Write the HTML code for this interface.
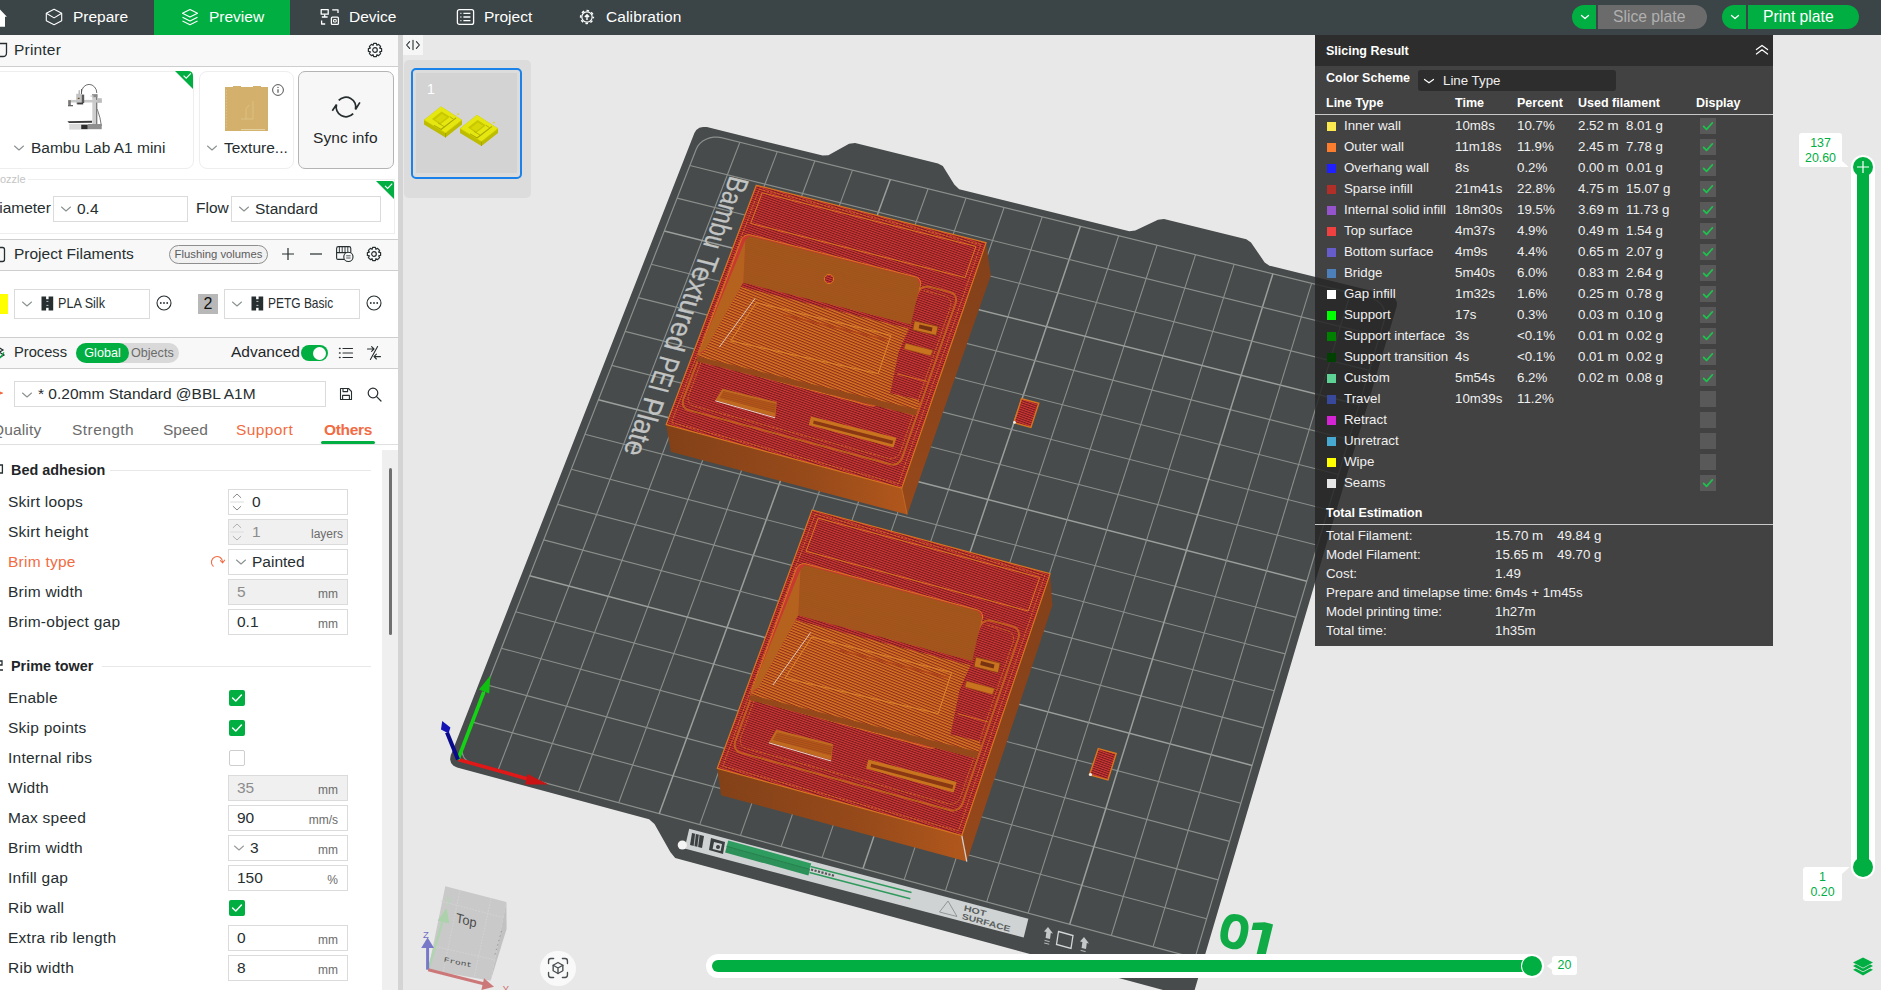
<!DOCTYPE html>
<html>
<head>
<meta charset="utf-8">
<title>Bambu Studio</title>
<style>
*{box-sizing:border-box;margin:0;padding:0}
html,body{width:1881px;height:990px;overflow:hidden;background:#e8e8e8;font-family:"Liberation Sans",sans-serif;color:#262e30}
.abs{position:absolute}
#top{position:absolute;left:0;top:0;width:1881px;height:35px;background:#3b4446;z-index:10}
.tab{position:absolute;top:0;height:35px;color:#fff;font-size:15.5px;line-height:34px;white-space:nowrap}
#left{position:absolute;left:0;top:0;width:398px;height:990px;background:#fff;overflow:hidden;z-index:5}
#divider{position:absolute;left:398px;top:0;width:5px;height:990px;background:#d4d4d4;z-index:5}
#view{position:absolute;left:0;top:0;width:1881px;height:990px;background:#e8e8e8;overflow:hidden;z-index:1}
#ov{position:absolute;left:0;top:0;width:1881px;height:990px;z-index:3}
.hdr{position:absolute;left:0;width:398px;background:#f8f8f8;border-top:1px solid #cecece;border-bottom:1px solid #cecece;font-size:15.5px}
.t{position:absolute;white-space:nowrap;font-size:15.5px;line-height:18px;color:#262e30}
.inp{position:absolute;height:26px;border:1px solid #dbdbdb;background:#fff;font-size:15.5px;line-height:24px;white-space:nowrap}
.inp.dis{background:#f0f0f0;color:#8c8c8c}
.unit{position:absolute;right:9px;top:2px;font-size:12px;color:#6b6b6b;line-height:24px}
.cb{position:absolute;width:16px;height:16px;border-radius:2px;background:#00ae42}
.cb.off{background:#fff;border:1px solid #cecece}
.r{position:absolute;white-space:nowrap;font-size:13.3px;line-height:16px;color:#f0f0f0}
.rb{position:absolute;white-space:nowrap;font-size:12.5px;line-height:16px;color:#fff;font-weight:bold}
</style>
</head>
<body>

<div id="top">
  <svg class="abs" style="left:0;top:0" width="12" height="35" viewBox="0 0 12 35"><path d="M-8 17 L-2 7.4 L6.9 16.7 L5 16.7 L5 26.8 L-8 26.8 Z" fill="#fff"/></svg>
  <div class="tab" style="left:73px">Prepare</div>
  <svg class="abs" style="left:44px;top:7px" width="20" height="21" viewBox="0 0 20 21" fill="none" stroke="#fff" stroke-width="1.1" stroke-linejoin="round"><path d="M10.1 2.2 L17.7 6.2 L17.7 13.7 L10.1 17.8 L2.3 13.7 L2.3 6.2 Z"/><path d="M2.3 6.2 L10.1 10.9 L17.7 6.2"/></svg>
  <div class="abs" style="left:154px;top:0;width:136px;height:35px;background:#00ae42"></div>
  <div class="tab" style="left:209px">Preview</div>
  <svg class="abs" style="left:180px;top:7px" width="20" height="21" viewBox="0 0 20 21" fill="none" stroke="#fff" stroke-width="1.1" stroke-linejoin="round"><path d="M10 2.5 L17.5 6.3 L10 10.1 L2.5 6.3 Z"/><path d="M2.5 10.2 L10 14 L17.5 10.2"/><path d="M2.5 14 L10 17.8 L17.5 14"/></svg>
  <div class="tab" style="left:349px">Device</div>
  <svg class="abs" style="left:319px;top:7px" width="22" height="21" viewBox="0 0 22 21" fill="none" stroke="#fff" stroke-width="1.3" stroke-linejoin="round"><rect x="2.2" y="2.6" width="7" height="4.6"/><path d="M5.7 7.2 L5.7 10 M2.8 10 L8.6 10"/><path d="M13.2 2.8 L19 2.8 L19 6"/><path d="M2.6 13.4 L2.6 17 L6.2 17"/><rect x="12.4" y="10.2" width="7" height="7.2" rx="1"/><rect x="14.6" y="12.6" width="2.6" height="2.4" stroke-width="1"/></svg>
  <div class="tab" style="left:484px">Project</div>
  <svg class="abs" style="left:455px;top:7px" width="22" height="21" viewBox="0 0 22 21" fill="none" stroke="#fff" stroke-width="1.3" stroke-linejoin="round"><rect x="2.4" y="2.6" width="16.2" height="14.8" rx="2"/><path d="M8.4 6.4 L15.4 6.4 M8.4 10 L15.4 10 M8.4 13.6 L15.4 13.6"/><path d="M5.4 6.4 L6.4 6.4 M5.4 10 L6.4 10 M5.4 13.6 L6.4 13.6"/></svg>
  <div class="tab" style="left:606px;letter-spacing:0.12px">Calibration</div>
  <svg class="abs" style="left:578px;top:8px" width="18" height="18" viewBox="0 0 18 18" fill="none" stroke="#fff" stroke-linejoin="round"><circle cx="9" cy="9" r="5.2" stroke-width="1.2"/><circle cx="9" cy="9" r="6.4" stroke-width="1.5" stroke-dasharray="2.6 2.43" stroke-dashoffset="1.3"/><path d="M9 12 L9 7.2 M6.9 9 L9 6.8 L11.1 9" stroke-width="1.4"/></svg>
  <div class="abs" style="left:1572px;top:5px;width:24px;height:24px;background:#00ae42;border-radius:12px 0 0 12px"></div>
  <svg class="abs" style="left:1580px;top:13px" width="10" height="8" viewBox="0 0 10 8" fill="none" stroke="#fff" stroke-width="1.3" stroke-linecap="round" stroke-linejoin="round"><path d="M1.5 2.5 L5 5.5 L8.5 2.5"/></svg>
  <div class="abs" style="left:1598px;top:5px;width:109px;height:24px;background:#6b6b6b;border-radius:0 12px 12px 0;color:#b0b0b0;font-size:15.7px;line-height:23px;padding-left:15px;white-space:nowrap">Slice plate</div>
  <div class="abs" style="left:1722px;top:5px;width:24px;height:24px;background:#00ae42;border-radius:12px 0 0 12px"></div>
  <svg class="abs" style="left:1730px;top:13px" width="10" height="8" viewBox="0 0 10 8" fill="none" stroke="#fff" stroke-width="1.3" stroke-linecap="round" stroke-linejoin="round"><path d="M1.5 2.5 L5 5.5 L8.5 2.5"/></svg>
  <div class="abs" style="left:1748px;top:5px;width:111px;height:24px;background:#00ae42;border-radius:0 12px 12px 0;color:#fff;font-size:15.7px;line-height:23px;padding-left:15px;white-space:nowrap">Print plate</div>
</div>
<div id="left">
  <div class="hdr" style="top:35px;height:32px;border-top:none"></div>
  <svg class="abs" style="left:-6px;top:41px" width="14" height="18" viewBox="0 0 14 18" fill="none" stroke="#262e30" stroke-width="1.3"><path d="M2 2.5 L12.5 2.5 L12.5 12 Q12.5 15.5 9 15.5 L2 15.5"/></svg>
  <div class="t" style="left:14px;top:41px;letter-spacing:0.2px">Printer</div>
  <svg class="abs" style="left:367px;top:42px" width="16" height="16" viewBox="0 0 16 16" fill="none" stroke="#262e30" stroke-width="1.2" stroke-linejoin="round"><path d="M6.6 1.4 L9.4 1.4 L9.9 3.3 L11.6 2.4 L13.6 4.4 L12.7 6.1 L14.6 6.6 L14.6 9.4 L12.7 9.9 L13.6 11.6 L11.6 13.6 L9.9 12.7 L9.4 14.6 L6.6 14.6 L6.1 12.7 L4.4 13.6 L2.4 11.6 L3.3 9.9 L1.4 9.4 L1.4 6.6 L3.3 6.1 L2.4 4.4 L4.4 2.4 L6.1 3.3 Z"/><circle cx="8" cy="8" r="2.3"/></svg>
  <div class="abs" style="left:-10px;top:71px;width:204px;height:98px;border:1px solid #eeeeee;border-radius:8px;background:#fff"></div>
  <div class="abs" style="left:199px;top:71px;width:95px;height:98px;border:1px solid #eeeeee;border-radius:8px;background:#fff"></div>
  <div class="abs" style="left:298px;top:71px;width:96px;height:98px;border:1px solid #b4b4b4;border-radius:7px;background:#f7f7f7"></div>
  <svg class="abs" style="left:175px;top:71px" width="19" height="19" viewBox="0 0 19 19"><path d="M0 0 L13 0 Q18 0 18 5 L18 18 Z" fill="#00ae42"/><path d="M8.6 4.6 L11.2 7.2 L15.8 2.4" fill="none" stroke="#fff" stroke-width="1.1"/></svg>
  <svg class="abs" style="left:13px;top:144px" width="12" height="8" viewBox="0 0 12 8" fill="none" stroke="#8b9191" stroke-width="1.1" stroke-linecap="round" stroke-linejoin="round"><path d="M1.5 2 L6 6 L10.5 2"/></svg>
  <div class="t" style="left:31px;top:139px">Bambu Lab A1 mini</div>
  <svg class="abs" style="left:206px;top:144px" width="12" height="8" viewBox="0 0 12 8" fill="none" stroke="#8b9191" stroke-width="1.1" stroke-linecap="round" stroke-linejoin="round"><path d="M1.5 2 L6 6 L10.5 2"/></svg>
  <div class="t" style="left:224px;top:139px">Texture...</div>
  <div class="t" style="left:313px;top:129px;color:#1f2628;letter-spacing:0.1px">Sync info</div>
  <svg class="abs" style="left:328.7px;top:91.3px" width="34" height="32" viewBox="0 0 34 32" fill="none" stroke="#262e30" stroke-width="1.7" stroke-linejoin="miter"><path d="M9.72 9.44 A9.8 9.8 0 0 1 26.47 18.54 L30.9 11.4"/><path d="M24.17 22.68 A9.8 9.8 0 0 1 7.53 13.46 L3.3 19.8"/></svg>
  <div class="abs" style="left:225px;top:87.4px;width:43px;height:44px;background:#d3b06b"></div><div class="abs" style="left:233px;top:86px;width:8px;height:2px;background:#d3b06b"></div><div class="abs" style="left:253px;top:86px;width:8px;height:2px;background:#d3b06b"></div>
  <svg class="abs" style="left:225px;top:87px" width="43" height="45" viewBox="0 0 43 45" fill="none" stroke="#e2c88e" stroke-width="0.7"><path d="M1.5 3 L1.5 42" stroke-dasharray="1.5 1.5"/><path d="M16 32 L28 32 L28 14 M21 32 L21 22 L24 18" /><path d="M16 42.6 L40 42.6" stroke="#e6d4a8" stroke-width="1"/></svg>
  <svg class="abs" style="left:271px;top:83px" width="14" height="14" viewBox="0 0 14 14"><circle cx="7" cy="7" r="5.4" fill="none" stroke="#555" stroke-width="1"/><path d="M7 6.2 L7 9.8" stroke="#555" stroke-width="1.2"/><circle cx="7" cy="4.4" r="0.7" fill="#555"/></svg>
  <svg class="abs" style="left:55px;top:76px" width="60" height="60" viewBox="0 0 60 60"><path d="M26.4 17 A7.7 8.6 0 0 1 41.8 17" fill="none" stroke="#4a4a4a" stroke-width="0.8"/><path d="M42.2 33 Q45.6 42 46.4 50" fill="none" stroke="#555" stroke-width="0.8"/><rect x="37.3" y="18.4" width="4.9" height="30.4" fill="#cdcdcd"/><rect x="41" y="18.4" width="1.3" height="30.4" fill="#7c7c7c"/><rect x="37" y="18.2" width="5.4" height="3" fill="#8a8a8a"/><rect x="35.4" y="19.4" width="3" height="1.4" fill="#d8d8d8"/><rect x="13.3" y="23.9" width="33.4" height="2.6" fill="#c9c9c9"/><rect x="42.2" y="22.2" width="4.6" height="4.6" fill="#bdbdbd"/><rect x="21.2" y="17.8" width="6" height="10.4" fill="#c4c4c4"/><rect x="26.8" y="18.6" width="2.4" height="8.4" fill="#5a5a5a"/><rect x="22.2" y="26.6" width="6" height="1.8" fill="#3c3c3c"/><rect x="22.8" y="21.8" width="1.8" height="1.2" fill="#6a5020"/><rect x="23.6" y="14.2" width="1.2" height="4" fill="#aaa"/><rect x="26" y="13" width="0.9" height="5" fill="#555"/><rect x="13.2" y="24.2" width="2.6" height="4.8" fill="#777"/><rect x="13" y="29" width="5" height="1.3" fill="#666"/><path d="M12.4 45.2 L37 44.8 L37 46.8 L14 47 Z" fill="#3a3a3a"/><rect x="14.2" y="47.9" width="12" height="5.7" fill="#dadada"/><rect x="26.2" y="48.6" width="6.6" height="4.6" fill="#2c2c2c"/><rect x="32.8" y="48" width="13.9" height="5.2" fill="#8e8e8e"/></svg>
  <div class="abs" style="left:-10px;top:179px;width:405px;height:55px;border:1px solid #eeeeee"></div>
  <div class="abs" style="left:-2px;top:172px;padding:0 2px;background:#fff;font-size:11px;color:#c4c4c4;line-height:14px">ozzle</div>
  <svg class="abs" style="left:376px;top:181px" width="19" height="19" viewBox="0 0 19 19"><path d="M0 0 L16 0 Q18 0 18 2 L18 18 Z" fill="#00ae42"/><path d="M9 4.8 L11.6 7.4 L16.2 2.6" fill="none" stroke="#fff" stroke-width="1.1"/></svg>
  <div class="t" style="left:-12px;top:199px">Diameter</div>
  <div class="inp" style="left:53px;top:196px;width:135px;padding-left:23px">0.4</div><svg class="abs" style="left:60px;top:205px" width="12" height="8" viewBox="0 0 12 8" fill="none" stroke="#8b9191" stroke-width="1.1" stroke-linecap="round" stroke-linejoin="round"><path d="M1.5 2 L6 6 L10.5 2"/></svg>
  <div class="t" style="left:196px;top:199px">Flow</div>
  <div class="inp" style="left:231px;top:196px;width:150px;padding-left:23px">Standard</div><svg class="abs" style="left:238px;top:205px" width="12" height="8" viewBox="0 0 12 8" fill="none" stroke="#8b9191" stroke-width="1.1" stroke-linecap="round" stroke-linejoin="round"><path d="M1.5 2 L6 6 L10.5 2"/></svg>
  <div class="hdr" style="top:239px;height:32px"></div>
  <svg class="abs" style="left:-6px;top:246px" width="14" height="18" viewBox="0 0 14 18" fill="none" stroke="#262e30" stroke-width="1.3"><rect x="1" y="1.5" width="9.5" height="14" rx="2"/></svg>
  <div class="t" style="left:14px;top:245px">Project Filaments</div>
  <div class="abs" style="left:169px;top:245px;width:99px;height:19px;border:1px solid #8e8e8e;border-radius:10px;background:#f1f1f1;font-size:11.3px;color:#5c5c5c;line-height:17px;text-align:center;white-space:nowrap">Flushing volumes</div>
  <svg class="abs" style="left:281px;top:247px" width="14" height="14" viewBox="0 0 14 14" stroke="#262e30" stroke-width="1.2"><path d="M7 1 L7 13 M1 7 L13 7"/></svg>
  <svg class="abs" style="left:309px;top:247px" width="14" height="14" viewBox="0 0 14 14" stroke="#262e30" stroke-width="1.2"><path d="M1 7 L13 7"/></svg>
  <svg class="abs" style="left:335px;top:245px" width="20" height="19" viewBox="0 0 20 19" fill="none" stroke="#262e30" stroke-width="1.1" stroke-linejoin="round"><path d="M1.6 7.6 L1.6 3.4 Q1.6 1.6 3.4 1.6 L14 1.6 Q15.8 1.6 15.8 3.4 L15.8 7.6 Z"/><path d="M4.4 1.6 L4.4 7.6 M7.2 1.6 L7.2 7.6 M10 1.6 L10 7.6 M12.8 1.6 L12.8 7.6" stroke-width="0.9"/><path d="M1.6 7.6 L1.6 13 Q1.6 14.4 3 14.4 L9 14.4"/><circle cx="13.4" cy="11.9" r="4.6" fill="#f8f8f8"/><path d="M11.2 10.8 L15.6 10.8 M11.2 13 L15.6 13" stroke-width="0.8"/></svg>
  <svg class="abs" style="left:366px;top:246px" width="16" height="16" viewBox="0 0 16 16" fill="none" stroke="#262e30" stroke-width="1.2" stroke-linejoin="round"><path d="M6.6 1.4 L9.4 1.4 L9.9 3.3 L11.6 2.4 L13.6 4.4 L12.7 6.1 L14.6 6.6 L14.6 9.4 L12.7 9.9 L13.6 11.6 L11.6 13.6 L9.9 12.7 L9.4 14.6 L6.6 14.6 L6.1 12.7 L4.4 13.6 L2.4 11.6 L3.3 9.9 L1.4 9.4 L1.4 6.6 L3.3 6.1 L2.4 4.4 L4.4 2.4 L6.1 3.3 Z"/><circle cx="8" cy="8" r="2.3"/></svg>
  <div class="abs" style="left:-6px;top:294px;width:14px;height:20px;background:#ffff00"></div>
  <div class="inp" style="left:14px;top:289px;width:136px;height:30px;line-height:27px;padding-left:43px;font-size:14.5px"><span style="display:inline-block;transform:scaleX(0.87);transform-origin:0 50%">PLA Silk</span></div><svg class="abs" style="left:21px;top:300px" width="12" height="8" viewBox="0 0 12 8" fill="none" stroke="#8b9191" stroke-width="1.1" stroke-linecap="round" stroke-linejoin="round"><path d="M1.5 2 L6 6 L10.5 2"/></svg><svg class="abs" style="left:41px;top:296px" width="13" height="15" viewBox="0 0 13 15"><rect x="0.5" y="0.5" width="4.6" height="14" fill="#262e30"/><rect x="7.6" y="0.5" width="4.6" height="14" fill="#262e30"/><rect x="5" y="3.2" width="3" height="8.6" fill="#262e30"/><path d="M5.4 5.4 L7.4 5.4 M5.4 9.4 L7.4 9.4" stroke="#fff" stroke-width="0.7"/></svg>
  <svg class="abs" style="left:155px;top:294px" width="18" height="18" viewBox="0 0 18 18"><circle cx="9" cy="9" r="7" fill="none" stroke="#262e30" stroke-width="1.1"/><circle cx="5.8" cy="9" r="0.9" fill="#262e30"/><circle cx="9" cy="9" r="0.9" fill="#262e30"/><circle cx="12.2" cy="9" r="0.9" fill="#262e30"/></svg>
  <div class="abs" style="left:198px;top:294px;width:20px;height:20px;background:#b8b8b8;font-size:16px;line-height:20px;text-align:center;color:#111">2</div>
  <div class="inp" style="left:224px;top:289px;width:136px;height:30px;line-height:27px;padding-left:43px;font-size:14.5px"><span style="display:inline-block;transform:scaleX(0.825);transform-origin:0 50%">PETG Basic</span></div><svg class="abs" style="left:231px;top:300px" width="12" height="8" viewBox="0 0 12 8" fill="none" stroke="#8b9191" stroke-width="1.1" stroke-linecap="round" stroke-linejoin="round"><path d="M1.5 2 L6 6 L10.5 2"/></svg><svg class="abs" style="left:251px;top:296px" width="13" height="15" viewBox="0 0 13 15"><rect x="0.5" y="0.5" width="4.6" height="14" fill="#262e30"/><rect x="7.6" y="0.5" width="4.6" height="14" fill="#262e30"/><rect x="5" y="3.2" width="3" height="8.6" fill="#262e30"/><path d="M5.4 5.4 L7.4 5.4 M5.4 9.4 L7.4 9.4" stroke="#fff" stroke-width="0.7"/></svg>
  <svg class="abs" style="left:365px;top:294px" width="18" height="18" viewBox="0 0 18 18"><circle cx="9" cy="9" r="7" fill="none" stroke="#262e30" stroke-width="1.1"/><circle cx="5.8" cy="9" r="0.9" fill="#262e30"/><circle cx="9" cy="9" r="0.9" fill="#262e30"/><circle cx="12.2" cy="9" r="0.9" fill="#262e30"/></svg>
  <div class="hdr" style="top:337px;height:32px"></div>
  <svg class="abs" style="left:-8px;top:344px" width="14" height="18" viewBox="0 0 14 18" fill="none" stroke="#262e30" stroke-width="1.2"><path d="M6 3 L11 6 L6 9 M7 8 L12 11 L6 14.5"/><path d="M5 11 L8.4 13.6 L12 8.4" stroke="#00ae42"/></svg>
  <div class="t" style="left:14px;top:343px;font-size:14.7px">Process</div>
  <div class="abs" style="left:76px;top:343px;width:103px;height:20px;border-radius:10px;background:#d9d9d9"></div>
  <div class="abs" style="left:76px;top:343px;width:53px;height:20px;border-radius:10px;background:#00ae42;color:#fff;font-size:12.6px;line-height:20px;text-align:center">Global</div>
  <div class="abs" style="left:131px;top:343px;font-size:12.6px;line-height:20px;color:#6b6b6b">Objects</div>
  <div class="t" style="left:231px;top:343px;color:#1f2628">Advanced</div>
  <div class="abs" style="left:301px;top:345px;width:27px;height:16px;border-radius:8px;background:#00ae42"></div><div class="abs" style="left:313px;top:346.5px;width:13px;height:13px;border-radius:7px;background:#fff"></div>
  <svg class="abs" style="left:338px;top:345px" width="16" height="16" viewBox="0 0 16 16" fill="none" stroke="#262e30" stroke-width="1.2" stroke-linecap="round"><path d="M5 3.5 L14.5 3.5 M5 8 L14.5 8 M5 12.5 L14.5 12.5"/><path d="M1.6 3.5 L2 3.5 M1.6 8 L2 8 M1.6 12.5 L2 12.5" stroke-width="1.6"/></svg>
  <svg class="abs" style="left:366px;top:345px" width="16" height="16" viewBox="0 0 16 16" fill="none" stroke="#262e30" stroke-width="1.1" stroke-linecap="round" stroke-linejoin="round"><path d="M1.5 4 L8 4 M5.6 1.6 L8 4 L5.6 6.4"/><path d="M14.5 11.6 L8 11.6 M10.4 9.2 L8 11.6 L10.4 14"/><path d="M11.6 1.6 L4.4 14.4"/></svg>
  <svg class="abs" style="left:-9.5px;top:386px" width="12" height="14" viewBox="0 0 12 14"><path d="M2 4 L10 7 L4 9 L6 12" fill="none" stroke="#f26b43" stroke-width="2"/></svg>
  <div class="inp" style="left:14px;top:381px;width:312px;height:26px;line-height:24px;padding-left:23px">* 0.20mm Standard @BBL A1M</div><svg class="abs" style="left:21px;top:391px" width="12" height="8" viewBox="0 0 12 8" fill="none" stroke="#8b9191" stroke-width="1.1" stroke-linecap="round" stroke-linejoin="round"><path d="M1.5 2 L6 6 L10.5 2"/></svg>
  <svg class="abs" style="left:338px;top:386px" width="16" height="16" viewBox="0 0 16 16" fill="none" stroke="#262e30" stroke-width="1.1" stroke-linejoin="round"><path d="M2.5 2.5 L10.5 2.5 L13.5 5.5 L13.5 13.5 L2.5 13.5 Z"/><path d="M5 2.5 L5 5.6 L9.6 5.6 L9.6 2.5"/><path d="M4.6 13.5 L4.6 9.4 L11.4 9.4 L11.4 13.5"/></svg>
  <svg class="abs" style="left:366px;top:386px" width="17" height="17" viewBox="0 0 17 17" fill="none" stroke="#262e30" stroke-width="1.2" stroke-linecap="round"><circle cx="7" cy="7" r="4.8"/><path d="M10.6 10.6 L15 15"/></svg>
  <div class="t" style="left:-8px;top:421px;color:#6b6b6b;letter-spacing:0.15px">Quality</div>
  <div class="t" style="left:72px;top:421px;color:#6b6b6b;letter-spacing:0.45px">Strength</div>
  <div class="t" style="left:163px;top:421px;color:#6b6b6b">Speed</div>
  <div class="t" style="left:236px;top:421px;color:#f26b43;letter-spacing:0.4px">Support</div>
  <div class="t" style="left:324px;top:421px;color:#f26b43;font-weight:bold;letter-spacing:-0.3px">Others</div>
  <div class="abs" style="left:321px;top:441px;width:54px;height:3px;border-radius:1.5px;background:#00ae42"></div>
  <div class="abs" style="left:0;top:444px;width:398px;height:1px;background:#dfdfdf"></div>
  <div class="abs" style="left:382px;top:450px;width:16px;height:540px;background:#efefef"></div>
  <div class="abs" style="left:389px;top:468px;width:3px;height:167px;background:#6f6f6f;border-radius:1.5px"></div>
  <svg class="abs" style="left:-7px;top:462px" width="12" height="16" viewBox="0 0 12 16" fill="none" stroke="#262e30" stroke-width="1.3"><path d="M3 3 L9.4 3 L9.4 11 L3 11 M6 11 L6 14"/></svg>
  <div class="t" style="left:11px;top:461px;font-weight:bold;font-size:14.4px;color:#1f2628">Bed adhesion</div><div class="abs" style="left:110px;top:470px;width:261px;height:1px;background:#e8e8e8"></div>
  <svg class="abs" style="left:-7px;top:658px" width="12" height="16" viewBox="0 0 12 16" fill="none" stroke="#262e30" stroke-width="1.3"><path d="M2 3 L9 3 L9 7 L4 7 L4 12 L10 12"/></svg>
  <div class="t" style="left:11px;top:657px;font-weight:bold;font-size:14.4px;color:#1f2628">Prime tower</div><div class="abs" style="left:102px;top:666px;width:269px;height:1px;background:#e8e8e8"></div>
  <div class="t" style="left:8px;top:493px;letter-spacing:0.25px">Skirt loops</div><div class="inp" style="left:228px;top:489px;width:120px;padding-left:23px">0</div><svg class="abs" style="left:230px;top:490px" width="14" height="24" viewBox="0 0 14 24" fill="none" stroke="#8a8a8a" stroke-width="1" stroke-linecap="round" stroke-linejoin="round"><path d="M3.2 7.6 L7 4 L10.8 7.6"/><path d="M3.2 16.4 L7 20 L10.8 16.4"/><path d="M0.5 12 L13.5 12" stroke="#dcdcdc"/></svg>
  <div class="t" style="left:8px;top:523px;letter-spacing:0.25px">Skirt height</div><div class="inp dis" style="left:228px;top:519px;width:120px;padding-left:23px">1<span class="unit" style="right:4px">layers</span></div><svg class="abs" style="left:230px;top:520px" width="14" height="24" viewBox="0 0 14 24" fill="none" stroke="#b0b0b0" stroke-width="1" stroke-linecap="round" stroke-linejoin="round"><path d="M3.2 7.6 L7 4 L10.8 7.6"/><path d="M3.2 16.4 L7 20 L10.8 16.4"/><path d="M0.5 12 L13.5 12" stroke="#dcdcdc"/></svg>
  <div class="t" style="left:8px;top:553px;letter-spacing:0.25px;color:#f26b43">Brim type</div><div class="inp" style="left:228px;top:549px;width:120px;padding-left:23px">Painted</div><svg class="abs" style="left:235px;top:558px" width="12" height="8" viewBox="0 0 12 8" fill="none" stroke="#8b9191" stroke-width="1.1" stroke-linecap="round" stroke-linejoin="round"><path d="M1.5 2 L6 6 L10.5 2"/></svg>
  <svg class="abs" style="left:209px;top:553px" width="17" height="17" viewBox="0 0 17 17" fill="none" stroke="#f26b43" stroke-width="1.1" stroke-linecap="round" stroke-linejoin="round"><path d="M4.2 13.2 A5.6 5.6 0 1 1 13.6 9.4"/><path d="M11.4 7.6 L13.7 9.8 L15.6 7.2"/></svg>
  <div class="t" style="left:8px;top:583px;letter-spacing:0.25px">Brim width</div><div class="inp dis" style="left:228px;top:579px;width:120px;padding-left:8px">5<span class="unit">mm</span></div>
  <div class="t" style="left:8px;top:613px;letter-spacing:0.25px">Brim-object gap</div><div class="inp" style="left:228px;top:609px;width:120px;padding-left:8px">0.1<span class="unit">mm</span></div>
  <div class="t" style="left:8px;top:689px;letter-spacing:0.25px">Enable</div><div class="cb" style="left:229px;top:690px"></div><svg class="abs" style="left:229px;top:690px" width="16" height="16" viewBox="0 0 16 16" fill="none" stroke="#fff" stroke-width="1.5" stroke-linecap="round" stroke-linejoin="round"><path d="M3.6 8 L6.8 11 L12.4 5"/></svg>
  <div class="t" style="left:8px;top:719px;letter-spacing:0.25px">Skip points</div><div class="cb" style="left:229px;top:720px"></div><svg class="abs" style="left:229px;top:720px" width="16" height="16" viewBox="0 0 16 16" fill="none" stroke="#fff" stroke-width="1.5" stroke-linecap="round" stroke-linejoin="round"><path d="M3.6 8 L6.8 11 L12.4 5"/></svg>
  <div class="t" style="left:8px;top:749px;letter-spacing:0.25px">Internal ribs</div><div class="cb off" style="left:229px;top:750px"></div>
  <div class="t" style="left:8px;top:779px;letter-spacing:0.25px">Width</div><div class="inp dis" style="left:228px;top:775px;width:120px;padding-left:8px">35<span class="unit">mm</span></div>
  <div class="t" style="left:8px;top:809px;letter-spacing:0.25px">Max speed</div><div class="inp" style="left:228px;top:805px;width:120px;padding-left:8px">90<span class="unit">mm/s</span></div>
  <div class="t" style="left:8px;top:839px;letter-spacing:0.25px">Brim width</div><div class="inp" style="left:228px;top:835px;width:120px;padding-left:21px">3<span class="unit">mm</span></div><svg class="abs" style="left:233px;top:844px" width="12" height="8" viewBox="0 0 12 8" fill="none" stroke="#9a9a9a" stroke-width="1.1" stroke-linecap="round" stroke-linejoin="round"><path d="M1.5 2 L6 6 L10.5 2"/></svg>
  <div class="t" style="left:8px;top:869px;letter-spacing:0.25px">Infill gap</div><div class="inp" style="left:228px;top:865px;width:120px;padding-left:8px">150<span class="unit">%</span></div>
  <div class="t" style="left:8px;top:899px;letter-spacing:0.25px">Rib wall</div><div class="cb" style="left:229px;top:900px"></div><svg class="abs" style="left:229px;top:900px" width="16" height="16" viewBox="0 0 16 16" fill="none" stroke="#fff" stroke-width="1.5" stroke-linecap="round" stroke-linejoin="round"><path d="M3.6 8 L6.8 11 L12.4 5"/></svg>
  <div class="t" style="left:8px;top:929px;letter-spacing:0.25px">Extra rib length</div><div class="inp" style="left:228px;top:925px;width:120px;padding-left:8px">0<span class="unit">mm</span></div>
  <div class="t" style="left:8px;top:959px;letter-spacing:0.25px">Rib width</div><div class="inp" style="left:228px;top:955px;width:120px;padding-left:8px">8<span class="unit">mm</span></div>
</div>
<div id="divider"></div>
<div id="view">
<svg class="abs" style="left:0;top:0" width="1881" height="990" viewBox="0 0 1881 990">
<defs><pattern id="hatchTop" width="2.2" height="2.2" patternUnits="userSpaceOnUse" patternTransform="rotate(20)"><rect width="2.2" height="2.2" fill="#d63838"/><rect width="2.2" height="1.05" fill="#721c1c"/></pattern><pattern id="hatchFloor" width="2.6" height="2.6" patternUnits="userSpaceOnUse" patternTransform="rotate(22)"><rect width="2.6" height="2.6" fill="#dc7a22"/><rect width="2.6" height="1.2" fill="#8c2c1c"/></pattern><pattern id="hatchSide" width="2" height="2" patternUnits="userSpaceOnUse" patternTransform="rotate(14)"><rect width="2" height="2" fill="#b5571b"/><rect width="2" height="0.7" fill="#9a4716"/></pattern><linearGradient id="gFront" x1="0" y1="0" x2="1" y2="0"><stop offset="0" stop-color="#7c3e18"/><stop offset="0.6" stop-color="#94491a"/><stop offset="1" stop-color="#b2581c"/></linearGradient><linearGradient id="gRight" x1="0" y1="0" x2="0" y2="1"><stop offset="0" stop-color="#82401a"/><stop offset="1" stop-color="#96481a"/></linearGradient></defs>
<polygon points="694.4,132.9 696.3,130.0 699.4,127.8 703.1,126.9 706.9,127.1 822.6,155.6 828.4,155.3 849.1,143.8 855.1,143.1 938.0,163.5 942.8,166.1 954.3,184.5 959.2,189.3 1129.3,231.2 1135.3,230.5 1158.0,219.7 1164.0,219.0 1246.3,239.2 1251.0,242.5 1264.7,262.4 1269.5,265.7 1389.5,295.3 1393.1,296.8 1395.7,299.5 1397.0,302.7 1396.8,306.1 1192.3,997.9 675.2,857.9 670.3,851.9 654.5,824.1 649.1,819.3 457.1,767.6 453.5,765.8 451.1,762.9 450.1,759.3 450.7,755.5" fill="#474b4b"/>
<polygon points="696.2,149.3 697.8,146.2 700.0,143.4 702.8,141.0 706.1,139.2 709.7,137.9 713.5,137.2 717.4,137.1 721.2,137.7 1370.0,297.7 1373.7,299.0 1377.1,300.8 1380.0,303.2 1382.3,306.0 1384.0,309.2 1384.9,312.5 1385.1,316.0 1384.5,319.4 1195.7,955.6 1195.0,956.7 1193.8,957.3 1192.5,957.3 472.0,763.3 469.4,762.3 467.0,760.8 465.1,759.0 463.6,756.8 462.6,754.3 462.2,751.7 462.4,749.0 463.1,746.4" fill="none" stroke="#8b908d" stroke-width="1.2"/>
<line x1="498.0" y1="770.3" x2="739.9" y2="142.3" stroke="#8a8f8c" stroke-width="1.1"/>
<line x1="472.6" y1="722.1" x2="1206.6" y2="918.8" stroke="#8a8f8c" stroke-width="1.1"/>
<line x1="538.1" y1="781.1" x2="777.3" y2="151.6" stroke="#8a8f8c" stroke-width="1.1"/>
<line x1="487.1" y1="685.0" x2="1218.2" y2="879.9" stroke="#8a8f8c" stroke-width="1.1"/>
<line x1="578.4" y1="791.9" x2="814.9" y2="160.8" stroke="#8a8f8c" stroke-width="1.1"/>
<line x1="501.4" y1="648.3" x2="1229.6" y2="841.4" stroke="#8a8f8c" stroke-width="1.1"/>
<line x1="618.7" y1="802.8" x2="852.5" y2="170.1" stroke="#8a8f8c" stroke-width="1.1"/>
<line x1="515.6" y1="611.8" x2="1240.9" y2="803.3" stroke="#8a8f8c" stroke-width="1.1"/>
<line x1="659.2" y1="813.7" x2="890.3" y2="179.4" stroke="#9a9f9c" stroke-width="1.5"/>
<line x1="529.7" y1="575.7" x2="1252.1" y2="765.4" stroke="#9a9f9c" stroke-width="1.5"/>
<line x1="699.7" y1="824.6" x2="928.1" y2="188.7" stroke="#8a8f8c" stroke-width="1.1"/>
<line x1="543.7" y1="539.9" x2="1263.3" y2="727.9" stroke="#8a8f8c" stroke-width="1.1"/>
<line x1="740.4" y1="835.6" x2="966.0" y2="198.1" stroke="#8a8f8c" stroke-width="1.1"/>
<line x1="557.6" y1="504.4" x2="1274.3" y2="690.8" stroke="#8a8f8c" stroke-width="1.1"/>
<line x1="781.2" y1="846.5" x2="1004.1" y2="207.5" stroke="#8a8f8c" stroke-width="1.1"/>
<line x1="571.3" y1="469.2" x2="1285.2" y2="653.9" stroke="#8a8f8c" stroke-width="1.1"/>
<line x1="822.1" y1="857.6" x2="1042.2" y2="216.9" stroke="#8a8f8c" stroke-width="1.1"/>
<line x1="584.9" y1="434.3" x2="1296.1" y2="617.4" stroke="#8a8f8c" stroke-width="1.1"/>
<line x1="863.0" y1="868.6" x2="1080.4" y2="226.3" stroke="#9a9f9c" stroke-width="1.5"/>
<line x1="598.4" y1="399.7" x2="1306.8" y2="581.2" stroke="#9a9f9c" stroke-width="1.5"/>
<line x1="904.2" y1="879.7" x2="1118.7" y2="235.7" stroke="#8a8f8c" stroke-width="1.1"/>
<line x1="611.8" y1="365.4" x2="1317.4" y2="545.3" stroke="#8a8f8c" stroke-width="1.1"/>
<line x1="945.4" y1="890.8" x2="1157.1" y2="245.2" stroke="#8a8f8c" stroke-width="1.1"/>
<line x1="625.1" y1="331.4" x2="1328.0" y2="509.7" stroke="#8a8f8c" stroke-width="1.1"/>
<line x1="986.7" y1="901.9" x2="1195.6" y2="254.7" stroke="#8a8f8c" stroke-width="1.1"/>
<line x1="638.3" y1="297.6" x2="1338.5" y2="474.5" stroke="#8a8f8c" stroke-width="1.1"/>
<line x1="1028.1" y1="913.1" x2="1234.2" y2="264.2" stroke="#8a8f8c" stroke-width="1.1"/>
<line x1="651.3" y1="264.2" x2="1348.9" y2="439.5" stroke="#8a8f8c" stroke-width="1.1"/>
<line x1="1069.7" y1="924.2" x2="1272.9" y2="273.7" stroke="#9a9f9c" stroke-width="1.5"/>
<line x1="664.3" y1="231.0" x2="1359.1" y2="404.8" stroke="#9a9f9c" stroke-width="1.5"/>
<line x1="1111.3" y1="935.5" x2="1311.6" y2="283.3" stroke="#8a8f8c" stroke-width="1.1"/>
<line x1="677.1" y1="198.1" x2="1369.3" y2="370.4" stroke="#8a8f8c" stroke-width="1.1"/>
<line x1="1153.1" y1="946.7" x2="1350.5" y2="292.9" stroke="#8a8f8c" stroke-width="1.1"/>
<line x1="689.9" y1="165.5" x2="1379.5" y2="336.3" stroke="#8a8f8c" stroke-width="1.1"/>
<text transform="matrix(-1.2647 3.2869 -3.7713 -0.9391 730.19 174.93)" font-family="Liberation Sans" font-size="7.4" font-weight="normal" font-style="normal" fill="#c2c4c3" stroke="#c2c4c3" stroke-width="0.06" textLength="21.70" lengthAdjust="spacingAndGlyphs">Bambu</text>
<text transform="matrix(-1.2934 3.3616 -3.8096 -0.9610 700.23 252.80)" font-family="Liberation Sans" font-size="7.4" font-weight="normal" font-style="normal" fill="#c2c4c3" stroke="#c2c4c3" stroke-width="0.06" textLength="28.40" lengthAdjust="spacingAndGlyphs">Textured</text>
<text transform="matrix(-1.3165 3.4216 -3.8400 -0.9785 661.03 354.66)" font-family="Liberation Sans" font-size="7.4" font-weight="normal" font-style="normal" fill="#c2c4c3" stroke="#c2c4c3" stroke-width="0.06" textLength="10.10" lengthAdjust="spacingAndGlyphs">PEI</text>
<text transform="matrix(-1.3336 3.4659 -3.8622 -0.9915 645.24 395.70)" font-family="Liberation Sans" font-size="7.4" font-weight="normal" font-style="normal" fill="#c2c4c3" stroke="#c2c4c3" stroke-width="0.06" textLength="16.50" lengthAdjust="spacingAndGlyphs">Plate</text>
<polygon points="689.2,828.7 1028.4,918.8 1023.7,937.5 684.6,848.6" fill="#d0d3d3"/>
<circle cx="682.3" cy="845" r="4.6" fill="#f4f4f4"/>
<polygon points="692.0,833.0 704.0,836.0 702.0,848.0 690.0,845.0" fill="#3a3f3f"/>
<path d="M695.5 834 L694 846.5 M699.2 835.2 L697.6 847.5" stroke="#d0d3d3" stroke-width="0.8"/>
<polygon points="711.0,838.0 725.0,842.0 723.0,854.0 709.0,850.0" fill="#3a3f3f"/>
<polygon points="714.0,842.0 722.0,844.0 720.6,851.0 712.6,849.0" fill="#d0d3d3"/>
<circle cx="718" cy="847" r="2" fill="#3a3f3f"/>
<path d="M727.4 843.4 L810.4 866.4" stroke="#2f9c5f" stroke-width="6.2"/>
<path d="M725.9 849.4 L809.2 872.4" stroke="#2c9158" stroke-width="6.2"/>
<path d="M726.6 846.4 L809.8 869.4" stroke="#1f7a46" stroke-width="0.9"/>
<path d="M810.5 866.4 L911.5 892.4" stroke="#2f9a5d" stroke-width="1.5"/>
<path d="M809.5 872.6 L910.3 898.8" stroke="#2f9a5d" stroke-width="1.5"/>
<path d="M811 869.5 L835 876" stroke="#555" stroke-width="2.2" stroke-dasharray="2.2 1.4"/>
<path d="M948 901 L939.5 912 L957 916.5 Z" fill="none" stroke="#8a8f8f" stroke-width="0.9"/>
<text transform="matrix(0.966 0.259 -0.2 0.98 963.5 910.5)" font-family="Liberation Sans" font-size="8" font-weight="bold" fill="#5a5f5f" textLength="23" lengthAdjust="spacingAndGlyphs">HOT</text>
<text transform="matrix(0.966 0.259 -0.2 0.98 961.5 918.8)" font-family="Liberation Sans" font-size="8" font-weight="bold" fill="#5a5f5f" textLength="50" lengthAdjust="spacingAndGlyphs">SURFACE</text>
<path d="M1048 927 L1044 931.5 L1046.4 932 L1045.6 938 L1050 939 L1050.8 933 L1053 933.6 Z" fill="#c4c8c8"/><path d="M1044.6 940.4 L1049.6 941.6 M1044.2 943 L1049.2 944.2" stroke="#c4c8c8" stroke-width="0.9"/>
<polygon points="1058.5,931.5 1073.0,935.5 1071.0,948.5 1056.5,944.5" fill="none" stroke="#d4d7d7" stroke-width="1.3"/>
<path d="M1084 937 L1080 941.5 L1082.4 942 L1081.6 948 L1086 949 L1086.8 943 L1089 943.6 Z" fill="#c4c8c8"/><path d="M1080.6 950.4 L1085.6 951.6" stroke="#c4c8c8" stroke-width="0.9"/>
<polygon points="666.2,424.5 901.7,488.1 907.2,514.6 670.9,451.7" fill="url(#gFront)"/>
<polygon points="666.2,424.5 901.7,488.1 907.2,514.6 670.9,451.7" fill="url(#hatchSide)" opacity="0.15"/>
<polygon points="986.1,242.7 990.8,275.4 907.2,514.6 901.7,488.1" fill="url(#gRight)"/>
<line x1="901.7" y1="488.1" x2="907.2" y2="514.6" stroke="#c46c24" stroke-width="0.9"/>
<polygon points="756.3,185.3 986.1,242.7 901.7,488.1 666.2,424.5" fill="url(#hatchTop)" stroke="#d9761f" stroke-width="1.2"/>
<polygon points="759.3,189.1 980.9,244.5 898.5,483.9 671.5,422.6" fill="none" stroke="#d9771f" stroke-width="0.8" stroke-dasharray="2.5 1.2"/>
<polygon points="762.1,192.8 975.9,246.4 965.1,277.6 750.7,223.4" fill="none" stroke="#d9771f" stroke-width="1"/>
<polygon points="741.1,240.2 742.2,238.1 743.9,236.4 746.0,235.2 748.3,234.7 750.5,234.9 915.8,276.9 917.8,277.8 919.4,279.3 920.4,281.3 920.7,283.5 920.3,285.8 880.2,400.3 879.0,402.5 877.3,404.3 875.1,405.5 872.8,406.1 870.5,405.8 703.0,361.5 701.0,360.6 699.5,359.1 698.6,357.1 698.4,354.8 698.9,352.4" fill="#c8392f" stroke="#d9771f" stroke-width="1"/>
<polyline points="700.7,352.9 683.3,399.3 682.7,402.0 682.9,404.7 684.0,407.1 685.8,408.9 688.2,410.0 890.8,464.4 893.5,464.7 896.3,464.1 898.8,462.6 900.8,460.5 902.2,457.9 955.7,302.7 956.2,300.0 955.8,297.4 954.7,295.0 952.8,293.3 950.4,292.2 928.9,286.7 926.2,286.5 923.5,287.1 921.0,288.5 919.1,290.5 917.7,293.0 880.2,400.3" fill="none" stroke="#cf6f20" stroke-width="1.7"/>
<polyline points="700.7,352.9 683.3,399.3 682.7,402.0 682.9,404.7 684.0,407.1 685.8,408.9 688.2,410.0 890.8,464.4 893.5,464.7 896.3,464.1 898.8,462.6 900.8,460.5 902.2,457.9 955.7,302.7 956.2,300.0 955.8,297.4 954.7,295.0 952.8,293.3 950.4,292.2 928.9,286.7 926.2,286.5 923.5,287.1 921.0,288.5 919.1,290.5 917.7,293.0 880.2,400.3" fill="none" stroke="#a8481a" stroke-width="0.6"/>
<polyline points="704.2,353.8 688.6,395.3 688.0,398.0 688.3,400.7 689.3,403.1 691.1,404.9 693.5,406.0 889.0,458.4 891.7,458.7 894.4,458.1 897.0,456.6 899.0,454.5 900.3,451.9 950.5,306.7 951.0,303.9 950.7,301.3 949.5,299.0 947.6,297.2 945.2,296.1 923.7,290.6" fill="none" stroke="#cf6f20" stroke-width="0.8" stroke-dasharray="3 1.2"/>
<polygon points="745.4,240.0 749.6,236.2 916.6,278.1 920.0,284.5 910.8,324.4 743.3,282.8" fill="#9e561c"/>
<polygon points="745.4,240.0 749.6,236.2 916.6,278.1 920.0,284.5 910.8,324.4 743.3,282.8" fill="url(#hatchSide)" opacity="0.3"/>
<polygon points="745.4,240.0 743.3,282.8 706.1,348.8 698.0,354.6" fill="#b4621e"/>
<polygon points="743.3,282.8 910.8,324.4 898.7,351.8 890.0,394.3 703.0,353.5" fill="url(#hatchFloor)"/>
<polygon points="743.3,282.8 910.8,324.4 909.2,328.5 740.6,286.8" fill="url(#hatchTop)"/>
<polygon points="756.3,302.7 890.9,335.4 878.2,373.7 730.7,340.9" fill="none" stroke="#e08a2c" stroke-width="0.9"/>
<polyline points="783.1,314.9 887.2,340.0" fill="none" stroke="#b0441a" stroke-width="1.6"/>
<polyline points="755.1,298.4 719.3,347.2" fill="none" stroke="#e8e0d8" stroke-width="1" opacity="0.8"/>
<polygon points="697.8,355.4 703.6,352.1 890.4,393.3 917.9,399.4 920.0,403.2 915.0,415.4 696.8,361.2" fill="url(#hatchFloor)"/>
<polygon points="697.6,356.4 917.5,409.6 915.0,415.4 696.8,361.2" fill="#95481a"/>
<circle cx="829.0" cy="279.0" r="4.6" fill="url(#hatchTop)" stroke="#d9771f" stroke-width="1"/>
<polygon points="914.4,320.8 938.1,326.4 936.2,335.4 912.8,329.9" fill="#c8741f" stroke="#8a3b14" stroke-width="0.8"/>
<polygon points="919.5,324.5 932.5,327.6 931.7,331.4 918.7,328.3" fill="#7a3312"/>
<polygon points="905.6,343.2 932.9,350.3 930.7,355.8 904.1,348.9" fill="#c8741f" stroke="#9a4416" stroke-width="0.6"/>
<polyline points="897.2,373.8 926.7,381.5" fill="none" stroke="#d9771f" stroke-width="0.9"/>
<polygon points="722.4,388.7 776.7,402.0 775.3,417.1 715.5,400.3" fill="#c06a20"/>
<polygon points="723.3,391.1 776.1,403.8 775.3,413.0 719.4,398.1" fill="url(#hatchSide)"/>
<polyline points="715.3,400.8 775.0,417.8" fill="none" stroke="#e6d8c8" stroke-width="1"/>
<polygon points="811.0,416.6 896.4,437.7 893.5,447.6 808.8,425.0" fill="#c8741f"/>
<polygon points="813.7,420.6 893.3,440.7 892.3,444.3 813.1,423.7" fill="#8a3714"/>
<polygon points="717.3,768.3 961.8,835.5 966.8,861.6 721.1,795.2" fill="url(#gFront)"/>
<polygon points="717.3,768.3 961.8,835.5 966.8,861.6 721.1,795.2" fill="url(#hatchSide)" opacity="0.15"/>
<polygon points="1050.1,573.7 1052.4,605.2 966.8,861.6 961.8,835.5" fill="url(#gRight)"/>
<line x1="961.8" y1="835.5" x2="966.8" y2="861.6" stroke="#d4d0cc" stroke-width="1.3"/>
<polygon points="812.1,510.0 1050.1,573.7 961.8,835.5 717.3,768.3" fill="url(#hatchTop)" stroke="#d9761f" stroke-width="1.2"/>
<polygon points="815.2,514.1 1044.8,575.6 958.5,831.0 722.8,766.3" fill="none" stroke="#d9771f" stroke-width="0.8" stroke-dasharray="2.5 1.2"/>
<polygon points="818.2,518.2 1039.7,577.5 1028.3,611.0 806.1,551.3" fill="none" stroke="#d9771f" stroke-width="1"/>
<polygon points="796.0,569.5 797.2,567.2 799.0,565.4 801.2,564.1 803.6,563.5 805.9,563.8 977.6,609.9 979.7,610.9 981.3,612.6 982.3,614.7 982.6,617.1 982.1,619.6 940.1,742.0 938.9,744.4 937.1,746.3 934.9,747.6 932.5,748.2 930.1,748.0 756.0,700.5 753.9,699.5 752.3,697.8 751.3,695.6 751.1,693.2 751.6,690.7" fill="#c8392f" stroke="#d9771f" stroke-width="1"/>
<polyline points="753.5,691.2 735.3,741.1 734.6,744.1 734.9,747.0 736.0,749.6 737.9,751.6 740.4,752.7 950.7,810.4 953.5,810.7 956.3,810.0 959.0,808.4 961.1,806.2 962.5,803.4 1018.5,637.8 1019.0,634.9 1018.7,632.1 1017.5,629.6 1015.6,627.7 1013.1,626.5 991.0,620.6 988.2,620.3 985.4,621.0 982.9,622.4 980.8,624.6 979.5,627.3 940.1,742.0" fill="none" stroke="#cf6f20" stroke-width="1.7"/>
<polyline points="753.5,691.2 735.3,741.1 734.6,744.1 734.9,747.0 736.0,749.6 737.9,751.6 740.4,752.7 950.7,810.4 953.5,810.7 956.3,810.0 959.0,808.4 961.1,806.2 962.5,803.4 1018.5,637.8 1019.0,634.9 1018.7,632.1 1017.5,629.6 1015.6,627.7 1013.1,626.5 991.0,620.6 988.2,620.3 985.4,621.0 982.9,622.4 980.8,624.6 979.5,627.3 940.1,742.0" fill="none" stroke="#a8481a" stroke-width="0.6"/>
<polyline points="757.2,692.2 740.8,736.8 740.2,739.8 740.5,742.7 741.6,745.3 743.5,747.3 745.9,748.4 948.8,804.0 951.6,804.3 954.5,803.6 957.1,802.1 959.2,799.8 960.6,797.0 1013.1,642.0 1013.6,639.1 1013.3,636.3 1012.1,633.8 1010.2,631.8 1007.7,630.7 985.6,624.7" fill="none" stroke="#cf6f20" stroke-width="0.8" stroke-dasharray="3 1.2"/>
<polygon points="800.5,569.3 804.9,565.2 978.4,611.3 981.8,618.1 972.2,660.9 798.3,615.6" fill="#9e561c"/>
<polygon points="800.5,569.3 804.9,565.2 978.4,611.3 981.8,618.1 972.2,660.9 798.3,615.6" fill="url(#hatchSide)" opacity="0.3"/>
<polygon points="800.5,569.3 798.3,615.6 759.2,686.7 750.7,693.0" fill="#b4621e"/>
<polygon points="798.3,615.6 972.2,660.9 959.5,690.2 950.3,735.6 756.0,691.8" fill="url(#hatchFloor)"/>
<polygon points="798.3,615.6 972.2,660.9 970.4,665.2 795.4,619.9" fill="url(#hatchTop)"/>
<polygon points="811.8,637.1 951.5,672.6 938.2,713.6 785.0,678.2" fill="none" stroke="#e08a2c" stroke-width="0.9"/>
<polyline points="839.8,650.3 947.7,677.6" fill="none" stroke="#b0441a" stroke-width="1.6"/>
<polyline points="810.6,632.5 773.0,685.0" fill="none" stroke="#e8e0d8" stroke-width="1" opacity="0.8"/>
<polygon points="750.5,693.8 756.5,690.3 950.7,734.5 979.0,741.1 981.1,745.1 975.9,758.2 749.5,700.1" fill="url(#hatchFloor)"/>
<polygon points="750.3,694.9 978.5,751.9 975.9,758.2 749.5,700.1" fill="#95481a"/>
<polygon points="975.8,657.1 1000.2,663.1 998.2,672.8 974.1,666.8" fill="#c8741f" stroke="#8a3b14" stroke-width="0.8"/>
<polygon points="981.1,661.0 994.5,664.4 993.6,668.4 980.2,665.1" fill="#7a3312"/>
<polygon points="966.6,681.0 994.7,688.6 992.4,694.5 965.0,687.1" fill="#c8741f" stroke="#9a4416" stroke-width="0.6"/>
<polyline points="957.8,713.7 988.1,722.0" fill="none" stroke="#d9771f" stroke-width="0.9"/>
<polygon points="776.2,729.7 832.9,744.0 831.4,760.2 769.0,742.2" fill="#c06a20"/>
<polygon points="777.1,732.3 832.2,745.9 831.3,755.8 773.0,739.9" fill="url(#hatchSide)"/>
<polyline points="768.8,742.8 831.1,761.0" fill="none" stroke="#e6d8c8" stroke-width="1"/>
<polygon points="868.5,759.6 956.6,781.9 953.6,792.5 866.1,768.5" fill="#c8741f"/>
<polygon points="871.2,763.8 953.4,785.1 952.4,788.9 870.6,767.1" fill="#8a3714"/>
<polygon points="1021.5,398.6 1038.8,403.2 1030.9,427.4 1013.9,422.6" fill="url(#hatchTop)" stroke="#d9761f" stroke-width="1.4"/>
<polygon points="1098.3,748.6 1116.2,753.5 1108.0,779.8 1089.5,774.7" fill="url(#hatchTop)" stroke="#d9761f" stroke-width="1.4"/>
<circle cx="1014.5" cy="422.4" r="1.4" fill="#eee"/><circle cx="1090.5" cy="774.5" r="1.6" fill="#eee"/>
<g transform="matrix(1.049 0.283 -0.243 1.002 1216.28 944.31)" fill="#10ab47"><path fill-rule="evenodd" d="M13.5 -33.5 C22 -33.5 26 -28 26 -16.5 C26 -5 22 0.5 13.5 0.5 C5 0.5 1 -5 1 -16.5 C1 -28 5 -33.5 13.5 -33.5 Z M13.5 -27 C10 -27 8 -23.4 8 -16.5 C8 -9.6 10 -6 13.5 -6 C17 -6 19 -9.6 19 -16.5 C19 -23.4 17 -27 13.5 -27 Z"/><path d="M46.5 8 L46.5 -33 L38.6 -33 L28.4 -29.6 L28.4 -22.4 L38.2 -25 L38.2 8 Z"/></g>
<path d="M458 759.5 L529.5 779.4" stroke="#e01818" stroke-width="3.6"/><path d="M527.5 774 L548.5 784.4 L525.2 784.6 Z" fill="#c81414"/>
<path d="M458 759.5 L483.8 692" stroke="#14d214" stroke-width="3.6"/><path d="M479 689.5 L490.4 675.6 L489.2 693.4 Z" fill="#10c010"/>
<path d="M458 759.5 L447 732.5" stroke="#0a0a8c" stroke-width="4"/><path d="M442.2 721 L450.4 727.6 L448.6 733.6 L441 729.6 Z" fill="#1414b4"/>
</svg>
</div>
<div id="ov">
<div class="abs" style="left:403px;top:35px;width:20px;height:20px;background:#f6f6f6"></div>
<svg class="abs" style="left:405px;top:39px" width="16" height="12" viewBox="0 0 16 12" fill="none" stroke="#262e30" stroke-width="1.1" stroke-linecap="round" stroke-linejoin="round"><path d="M4.6 2.6 L1.6 6 L4.6 9.4"/><path d="M11.4 2.6 L14.4 6 L11.4 9.4"/><path d="M8 1.4 L8 10.6"/></svg>
<div class="abs" style="left:404px;top:60px;width:127px;height:138px;background:#dcdcdc;border-radius:5px"></div>
<div class="abs" style="left:411px;top:67.5px;width:111px;height:111px;background:#dcdcdc;border:2px solid #1a82e8;border-radius:5px"></div>
<div class="abs" style="left:416px;top:73px;width:101px;height:100px;background:#d3d3d3"></div>
<div class="abs" style="left:427px;top:81px;font-size:14px;color:#fff;line-height:16px">1</div>
<svg class="abs" style="left:411px;top:68px" width="110" height="110" viewBox="0 0 110 110"><g transform="translate(13 38.5) scale(1.0)"><path d="M0 13.5 L17 0 L38 13.5 L38 18 L21.5 31 L0 18 Z" fill="#bdbc00"/><path d="M0 13.5 L17 0 L38 13.5 L21.5 26.5 Z" fill="#e6e610"/><path d="M8 12.6 L17.6 5 L26 10.2 L16 18 Z" fill="#c8c800"/><path d="M11 13 L17.8 7.6 L23 10.8 L16 16.2 Z" fill="#d8d808"/><path d="M10 19 L17 23 L32 11.4" fill="none" stroke="#a8a800" stroke-width="1.1"/><path d="M14 16.4 L20 20 M26 10.4 L29.5 12.6" stroke="#b0b000" stroke-width="0.9"/><path d="M0 13.5 L21.5 26.5 L38 13.5" fill="none" stroke="#d0d000" stroke-width="0.7"/><path d="M21.5 26.5 L21.5 31" stroke="#a0a000" stroke-width="0.8"/><circle cx="34" cy="7.6" r="0.9" fill="#e0d800"/></g><g transform="translate(49 47) scale(1.0)"><path d="M0 13.5 L17 0 L38 13.5 L38 18 L21.5 31 L0 18 Z" fill="#bdbc00"/><path d="M0 13.5 L17 0 L38 13.5 L21.5 26.5 Z" fill="#e6e610"/><path d="M8 12.6 L17.6 5 L26 10.2 L16 18 Z" fill="#c8c800"/><path d="M11 13 L17.8 7.6 L23 10.8 L16 16.2 Z" fill="#d8d808"/><path d="M10 19 L17 23 L32 11.4" fill="none" stroke="#a8a800" stroke-width="1.1"/><path d="M14 16.4 L20 20 M26 10.4 L29.5 12.6" stroke="#b0b000" stroke-width="0.9"/><path d="M0 13.5 L21.5 26.5 L38 13.5" fill="none" stroke="#d0d000" stroke-width="0.7"/><path d="M21.5 26.5 L21.5 31" stroke="#a0a000" stroke-width="0.8"/><circle cx="34" cy="7.6" r="0.9" fill="#e0d800"/></g></svg>
<div class="abs" style="left:1315px;top:35px;width:458px;height:31px;background:#2d2d2d"></div>
<div class="abs" style="left:1315px;top:66px;width:458px;height:580px;background:rgba(38,38,38,0.86)"></div>
<div class="rb" style="left:1326px;top:43px">Slicing Result</div>
<svg class="abs" style="left:1754px;top:43px" width="16" height="14" viewBox="0 0 16 14" fill="none" stroke="#fff" stroke-width="1.2" stroke-linecap="round" stroke-linejoin="round"><path d="M2.4 6.6 L8 2.4 L13.6 6.6"/><path d="M2.4 11 L8 6.8 L13.6 11"/></svg>
<div class="rb" style="left:1326px;top:70px">Color Scheme</div>
<div class="abs" style="left:1418px;top:70px;width:198px;height:21px;background:#2d2d2d;border-radius:3px"></div>
<svg class="abs" style="left:1422px;top:77px" width="14" height="8" viewBox="0 0 14 8" fill="none" stroke="#fff" stroke-width="1.2" stroke-linecap="round" stroke-linejoin="round"><path d="M2.5 2.4 L7 5.8 L11.5 2.4"/></svg>
<div class="r" style="left:1443px;top:73px">Line Type</div>
<div class="rb" style="left:1326px;top:95px">Line Type</div>
<div class="rb" style="left:1455px;top:95px">Time</div>
<div class="rb" style="left:1517px;top:95px">Percent</div>
<div class="rb" style="left:1578px;top:95px">Used filament</div>
<div class="rb" style="left:1696px;top:95px">Display</div>
<div class="abs" style="left:1315px;top:114px;width:458px;height:1px;background:#c8c8c8"></div>
<div class="abs" style="left:1327px;top:122px;width:9px;height:9px;background:#fce94f"></div>
<div class="r" style="left:1344px;top:118px">Inner wall</div>
<div class="r" style="left:1455px;top:118px">10m8s</div>
<div class="r" style="left:1517px;top:118px">10.7%</div>
<div class="r" style="left:1578px;top:118px">2.52 m</div><div class="r" style="left:1626px;top:118px">8.01 g</div>
<div class="abs" style="left:1700px;top:118px;width:16px;height:16px;background:#595959"></div>
<svg class="abs" style="left:1700px;top:118px" width="16" height="16" viewBox="0 0 16 16" fill="none" stroke="#1cc44c" stroke-width="1.7" stroke-linecap="round" stroke-linejoin="round"><path d="M3.6 8.4 L6.6 11.4 L12.4 4.8"/></svg>
<div class="abs" style="left:1327px;top:143px;width:9px;height:9px;background:#fd7d2f"></div>
<div class="r" style="left:1344px;top:139px">Outer wall</div>
<div class="r" style="left:1455px;top:139px">11m18s</div>
<div class="r" style="left:1517px;top:139px">11.9%</div>
<div class="r" style="left:1578px;top:139px">2.45 m</div><div class="r" style="left:1626px;top:139px">7.78 g</div>
<div class="abs" style="left:1700px;top:139px;width:16px;height:16px;background:#595959"></div>
<svg class="abs" style="left:1700px;top:139px" width="16" height="16" viewBox="0 0 16 16" fill="none" stroke="#1cc44c" stroke-width="1.7" stroke-linecap="round" stroke-linejoin="round"><path d="M3.6 8.4 L6.6 11.4 L12.4 4.8"/></svg>
<div class="abs" style="left:1327px;top:164px;width:9px;height:9px;background:#1f1fff"></div>
<div class="r" style="left:1344px;top:160px">Overhang wall</div>
<div class="r" style="left:1455px;top:160px">8s</div>
<div class="r" style="left:1517px;top:160px">0.2%</div>
<div class="r" style="left:1578px;top:160px">0.00 m</div><div class="r" style="left:1626px;top:160px">0.01 g</div>
<div class="abs" style="left:1700px;top:160px;width:16px;height:16px;background:#595959"></div>
<svg class="abs" style="left:1700px;top:160px" width="16" height="16" viewBox="0 0 16 16" fill="none" stroke="#1cc44c" stroke-width="1.7" stroke-linecap="round" stroke-linejoin="round"><path d="M3.6 8.4 L6.6 11.4 L12.4 4.8"/></svg>
<div class="abs" style="left:1327px;top:185px;width:9px;height:9px;background:#b03029"></div>
<div class="r" style="left:1344px;top:181px">Sparse infill</div>
<div class="r" style="left:1455px;top:181px">21m41s</div>
<div class="r" style="left:1517px;top:181px">22.8%</div>
<div class="r" style="left:1578px;top:181px">4.75 m</div><div class="r" style="left:1626px;top:181px">15.07 g</div>
<div class="abs" style="left:1700px;top:181px;width:16px;height:16px;background:#595959"></div>
<svg class="abs" style="left:1700px;top:181px" width="16" height="16" viewBox="0 0 16 16" fill="none" stroke="#1cc44c" stroke-width="1.7" stroke-linecap="round" stroke-linejoin="round"><path d="M3.6 8.4 L6.6 11.4 L12.4 4.8"/></svg>
<div class="abs" style="left:1327px;top:206px;width:9px;height:9px;background:#9654cc"></div>
<div class="r" style="left:1344px;top:202px">Internal solid infill</div>
<div class="r" style="left:1455px;top:202px">18m30s</div>
<div class="r" style="left:1517px;top:202px">19.5%</div>
<div class="r" style="left:1578px;top:202px">3.69 m</div><div class="r" style="left:1626px;top:202px">11.73 g</div>
<div class="abs" style="left:1700px;top:202px;width:16px;height:16px;background:#595959"></div>
<svg class="abs" style="left:1700px;top:202px" width="16" height="16" viewBox="0 0 16 16" fill="none" stroke="#1cc44c" stroke-width="1.7" stroke-linecap="round" stroke-linejoin="round"><path d="M3.6 8.4 L6.6 11.4 L12.4 4.8"/></svg>
<div class="abs" style="left:1327px;top:227px;width:9px;height:9px;background:#f04040"></div>
<div class="r" style="left:1344px;top:223px">Top surface</div>
<div class="r" style="left:1455px;top:223px">4m37s</div>
<div class="r" style="left:1517px;top:223px">4.9%</div>
<div class="r" style="left:1578px;top:223px">0.49 m</div><div class="r" style="left:1626px;top:223px">1.54 g</div>
<div class="abs" style="left:1700px;top:223px;width:16px;height:16px;background:#595959"></div>
<svg class="abs" style="left:1700px;top:223px" width="16" height="16" viewBox="0 0 16 16" fill="none" stroke="#1cc44c" stroke-width="1.7" stroke-linecap="round" stroke-linejoin="round"><path d="M3.6 8.4 L6.6 11.4 L12.4 4.8"/></svg>
<div class="abs" style="left:1327px;top:248px;width:9px;height:9px;background:#665ccc"></div>
<div class="r" style="left:1344px;top:244px">Bottom surface</div>
<div class="r" style="left:1455px;top:244px">4m9s</div>
<div class="r" style="left:1517px;top:244px">4.4%</div>
<div class="r" style="left:1578px;top:244px">0.65 m</div><div class="r" style="left:1626px;top:244px">2.07 g</div>
<div class="abs" style="left:1700px;top:244px;width:16px;height:16px;background:#595959"></div>
<svg class="abs" style="left:1700px;top:244px" width="16" height="16" viewBox="0 0 16 16" fill="none" stroke="#1cc44c" stroke-width="1.7" stroke-linecap="round" stroke-linejoin="round"><path d="M3.6 8.4 L6.6 11.4 L12.4 4.8"/></svg>
<div class="abs" style="left:1327px;top:269px;width:9px;height:9px;background:#4d80ba"></div>
<div class="r" style="left:1344px;top:265px">Bridge</div>
<div class="r" style="left:1455px;top:265px">5m40s</div>
<div class="r" style="left:1517px;top:265px">6.0%</div>
<div class="r" style="left:1578px;top:265px">0.83 m</div><div class="r" style="left:1626px;top:265px">2.64 g</div>
<div class="abs" style="left:1700px;top:265px;width:16px;height:16px;background:#595959"></div>
<svg class="abs" style="left:1700px;top:265px" width="16" height="16" viewBox="0 0 16 16" fill="none" stroke="#1cc44c" stroke-width="1.7" stroke-linecap="round" stroke-linejoin="round"><path d="M3.6 8.4 L6.6 11.4 L12.4 4.8"/></svg>
<div class="abs" style="left:1327px;top:290px;width:9px;height:9px;background:#ffffff"></div>
<div class="r" style="left:1344px;top:286px">Gap infill</div>
<div class="r" style="left:1455px;top:286px">1m32s</div>
<div class="r" style="left:1517px;top:286px">1.6%</div>
<div class="r" style="left:1578px;top:286px">0.25 m</div><div class="r" style="left:1626px;top:286px">0.78 g</div>
<div class="abs" style="left:1700px;top:286px;width:16px;height:16px;background:#595959"></div>
<svg class="abs" style="left:1700px;top:286px" width="16" height="16" viewBox="0 0 16 16" fill="none" stroke="#1cc44c" stroke-width="1.7" stroke-linecap="round" stroke-linejoin="round"><path d="M3.6 8.4 L6.6 11.4 L12.4 4.8"/></svg>
<div class="abs" style="left:1327px;top:311px;width:9px;height:9px;background:#00ff00"></div>
<div class="r" style="left:1344px;top:307px">Support</div>
<div class="r" style="left:1455px;top:307px">17s</div>
<div class="r" style="left:1517px;top:307px">0.3%</div>
<div class="r" style="left:1578px;top:307px">0.03 m</div><div class="r" style="left:1626px;top:307px">0.10 g</div>
<div class="abs" style="left:1700px;top:307px;width:16px;height:16px;background:#595959"></div>
<svg class="abs" style="left:1700px;top:307px" width="16" height="16" viewBox="0 0 16 16" fill="none" stroke="#1cc44c" stroke-width="1.7" stroke-linecap="round" stroke-linejoin="round"><path d="M3.6 8.4 L6.6 11.4 L12.4 4.8"/></svg>
<div class="abs" style="left:1327px;top:332px;width:9px;height:9px;background:#008000"></div>
<div class="r" style="left:1344px;top:328px">Support interface</div>
<div class="r" style="left:1455px;top:328px">3s</div>
<div class="r" style="left:1517px;top:328px">&lt;0.1%</div>
<div class="r" style="left:1578px;top:328px">0.01 m</div><div class="r" style="left:1626px;top:328px">0.02 g</div>
<div class="abs" style="left:1700px;top:328px;width:16px;height:16px;background:#595959"></div>
<svg class="abs" style="left:1700px;top:328px" width="16" height="16" viewBox="0 0 16 16" fill="none" stroke="#1cc44c" stroke-width="1.7" stroke-linecap="round" stroke-linejoin="round"><path d="M3.6 8.4 L6.6 11.4 L12.4 4.8"/></svg>
<div class="abs" style="left:1327px;top:353px;width:9px;height:9px;background:#004000"></div>
<div class="r" style="left:1344px;top:349px">Support transition</div>
<div class="r" style="left:1455px;top:349px">4s</div>
<div class="r" style="left:1517px;top:349px">&lt;0.1%</div>
<div class="r" style="left:1578px;top:349px">0.01 m</div><div class="r" style="left:1626px;top:349px">0.02 g</div>
<div class="abs" style="left:1700px;top:349px;width:16px;height:16px;background:#595959"></div>
<svg class="abs" style="left:1700px;top:349px" width="16" height="16" viewBox="0 0 16 16" fill="none" stroke="#1cc44c" stroke-width="1.7" stroke-linecap="round" stroke-linejoin="round"><path d="M3.6 8.4 L6.6 11.4 L12.4 4.8"/></svg>
<div class="abs" style="left:1327px;top:374px;width:9px;height:9px;background:#5ed194"></div>
<div class="r" style="left:1344px;top:370px">Custom</div>
<div class="r" style="left:1455px;top:370px">5m54s</div>
<div class="r" style="left:1517px;top:370px">6.2%</div>
<div class="r" style="left:1578px;top:370px">0.02 m</div><div class="r" style="left:1626px;top:370px">0.08 g</div>
<div class="abs" style="left:1700px;top:370px;width:16px;height:16px;background:#595959"></div>
<svg class="abs" style="left:1700px;top:370px" width="16" height="16" viewBox="0 0 16 16" fill="none" stroke="#1cc44c" stroke-width="1.7" stroke-linecap="round" stroke-linejoin="round"><path d="M3.6 8.4 L6.6 11.4 L12.4 4.8"/></svg>
<div class="abs" style="left:1327px;top:395px;width:9px;height:9px;background:#38489b"></div>
<div class="r" style="left:1344px;top:391px">Travel</div>
<div class="r" style="left:1455px;top:391px">10m39s</div>
<div class="r" style="left:1517px;top:391px">11.2%</div>
<div class="abs" style="left:1700px;top:391px;width:16px;height:16px;background:#595959"></div>
<div class="abs" style="left:1327px;top:416px;width:9px;height:9px;background:#d424d4"></div>
<div class="r" style="left:1344px;top:412px">Retract</div>
<div class="abs" style="left:1700px;top:412px;width:16px;height:16px;background:#595959"></div>
<div class="abs" style="left:1327px;top:437px;width:9px;height:9px;background:#47a8d1"></div>
<div class="r" style="left:1344px;top:433px">Unretract</div>
<div class="abs" style="left:1700px;top:433px;width:16px;height:16px;background:#595959"></div>
<div class="abs" style="left:1327px;top:458px;width:9px;height:9px;background:#ffff00"></div>
<div class="r" style="left:1344px;top:454px">Wipe</div>
<div class="abs" style="left:1700px;top:454px;width:16px;height:16px;background:#595959"></div>
<div class="abs" style="left:1327px;top:479px;width:9px;height:9px;background:#e6e6e6"></div>
<div class="r" style="left:1344px;top:475px">Seams</div>
<div class="abs" style="left:1700px;top:475px;width:16px;height:16px;background:#595959"></div>
<svg class="abs" style="left:1700px;top:475px" width="16" height="16" viewBox="0 0 16 16" fill="none" stroke="#1cc44c" stroke-width="1.7" stroke-linecap="round" stroke-linejoin="round"><path d="M3.6 8.4 L6.6 11.4 L12.4 4.8"/></svg>
<div class="rb" style="left:1326px;top:505px">Total Estimation</div>
<div class="abs" style="left:1315px;top:524px;width:458px;height:1px;background:#c8c8c8"></div>
<div class="r" style="left:1326px;top:528px">Total Filament:</div><div class="r" style="left:1495px;top:528px">15.70 m</div>
<div class="r" style="left:1557px;top:528px">49.84 g</div>
<div class="r" style="left:1326px;top:547px">Model Filament:</div><div class="r" style="left:1495px;top:547px">15.65 m</div>
<div class="r" style="left:1557px;top:547px">49.70 g</div>
<div class="r" style="left:1326px;top:566px">Cost:</div><div class="r" style="left:1495px;top:566px">1.49</div>
<div class="r" style="left:1326px;top:585px">Prepare and timelapse time:</div><div class="r" style="left:1495px;top:585px">6m4s + 1m45s</div>
<div class="r" style="left:1326px;top:604px">Model printing time:</div><div class="r" style="left:1495px;top:604px">1h27m</div>
<div class="r" style="left:1326px;top:623px">Total time:</div><div class="r" style="left:1495px;top:623px">1h35m</div>
<div class="abs" style="left:1851px;top:155px;width:24px;height:724px;background:#fff;border-radius:12px"></div>
<div class="abs" style="left:1857px;top:167px;width:12px;height:700px;background:#00ae42"></div>
<div class="abs" style="left:1853px;top:157px;width:20px;height:20px;border-radius:10px;background:#00ae42"></div>
<svg class="abs" style="left:1856px;top:160px" width="14" height="14" viewBox="0 0 14 14" stroke="#fff" stroke-width="1.2"><path d="M7 1 L7 13 M1 7 L13 7"/></svg>
<div class="abs" style="left:1853px;top:857px;width:20px;height:20px;border-radius:10px;background:#00ae42"></div>
<div class="abs" style="left:1799px;top:133px;width:43px;height:34px;background:#fff;border-radius:3px;color:#00ae42;font-size:12.4px;line-height:15px;text-align:center;padding-top:2.5px">137<br>20.60</div>
<svg class="abs" style="left:1841px;top:157px" width="10" height="10" viewBox="0 0 10 10"><path d="M0 3 L7.6 10 L0 10 Z" fill="#fff"/></svg>
<div class="abs" style="left:1803px;top:867px;width:39px;height:34px;background:#fff;border-radius:3px;color:#00ae42;font-size:12.4px;line-height:15px;text-align:center;padding-top:2.5px">1<br>0.20</div>
<svg class="abs" style="left:1840px;top:866px" width="10" height="10" viewBox="0 0 10 10"><path d="M0 1 L9.6 1 L2 8 Z" fill="#fff"/></svg>
<div class="abs" style="left:706px;top:954px;width:838px;height:24px;background:#fff;border-radius:12px"></div>
<div class="abs" style="left:712px;top:960px;width:820px;height:12px;background:#00ae42;border-radius:6px 0 0 6px"></div>
<div class="abs" style="left:1521.4px;top:955px;width:22px;height:22px;border-radius:11px;background:#fff"></div><div class="abs" style="left:1522.4px;top:956px;width:20px;height:20px;border-radius:10px;background:#00ae42"></div>
<div class="abs" style="left:1552px;top:956px;width:25px;height:19px;background:#fff;border-radius:3px;color:#00ae42;font-size:12.4px;line-height:19px;text-align:center">20</div>
<svg class="abs" style="left:1546px;top:961px" width="8" height="10" viewBox="0 0 8 10"><path d="M7 0.6 L7 9.4 L0.8 5 Z" fill="#fff"/></svg>
<svg class="abs" style="left:1852px;top:956px" width="22" height="22" viewBox="0 0 22 22" fill="#00ae42"><path d="M11 1.4 L21 6.6 L11 11.8 L1 6.6 Z"/><path d="M1 10 L3.8 8.6 L11 12.4 L18.2 8.6 L21 10 L11 15.4 Z"/><path d="M1 13.8 L3.8 12.4 L11 16.2 L18.2 12.4 L21 13.8 L11 19.4 Z"/></svg>
<div class="abs" style="left:540px;top:950.6px;width:35.5px;height:35.5px;border-radius:18px;background:#f9f9f9"></div>
<svg class="abs" style="left:546.6px;top:957.4px" width="22" height="22" viewBox="0 0 20 20" fill="none" stroke="#4a5052" stroke-width="1.25" stroke-linecap="round" stroke-linejoin="round"><path d="M1.4 6 L1.4 3.6 Q1.4 1.4 3.6 1.4 L6 1.4 M14 1.4 L16.4 1.4 Q18.6 1.4 18.6 3.6 L18.6 6 M18.6 14 L18.6 16.4 Q18.6 18.6 16.4 18.6 L14 18.6 M6 18.6 L3.6 18.6 Q1.4 18.6 1.4 16.4 L1.4 14"/><path d="M10 5 L14.4 7.5 L14.4 12.5 L10 15 L5.6 12.5 L5.6 7.5 Z"/><path d="M5.6 7.5 L10 10 L14.4 7.5 M10 10 L10 15"/></svg>
<svg class="abs" style="left:0;top:0" width="1881" height="990" viewBox="0 0 1881 990"><path d="M445.3 886.3 L506.4 902 L490.6 980.8 L428.2 969.7 Z" fill="#c9c9c9"/><path d="M506.4 902 L506.6 929 L490.6 980.8 Z" fill="#c2c2c2"/><path d="M440.6 901 L502.6 917.4 M433 946 L495.6 960 M460 890.4 L443 972.4 M491 898.4 L474 978" stroke="#d6d6d6" stroke-width="0.8" stroke-dasharray="1.6 1.4" fill="none"/><path d="M501.4 931 L494.6 956" stroke="#8c8c8c" stroke-width="0.8" stroke-dasharray="1.4 3.2" fill="none"/><text transform="matrix(0.96 0.27 -0.12 0.99 455.6 922)" font-family="Liberation Sans" font-size="13.2" fill="#4c4c4c">Top</text><text transform="matrix(0.97 0.2 -0.1 0.62 443.6 961.6)" font-family="Liberation Mono" font-size="11" fill="#4c4c4c" textLength="29" lengthAdjust="spacingAndGlyphs">Front</text><path d="M428.4 969.6 L446 909.6" stroke="#b0d4b0" stroke-width="2.4"/><path d="M446.6 908.6 L437.6 920.6 L449.4 923.6 Z" fill="#acd2ac"/><path d="M427.6 969.7 L427.6 946" stroke="#7878c8" stroke-width="3"/><path d="M427.6 937.5 L421.2 948 L434 948 Z" fill="#7878c8"/><path d="M428.2 969.7 L485.6 984.2" stroke="#cd7878" stroke-width="3"/><path d="M494 986.8 L484 978.2 L481.4 990 Z" fill="#cd7878"/><text x="423" y="938" font-family="Liberation Sans" font-size="9.5" fill="#7070c4">Z</text><text x="446" y="903" font-family="Liberation Sans" font-size="10" fill="#b4d8b4">y</text><text x="502.5" y="994" font-family="Liberation Sans" font-size="10" fill="#cd6e6e">X</text></svg>
</div>
</body>
</html>
